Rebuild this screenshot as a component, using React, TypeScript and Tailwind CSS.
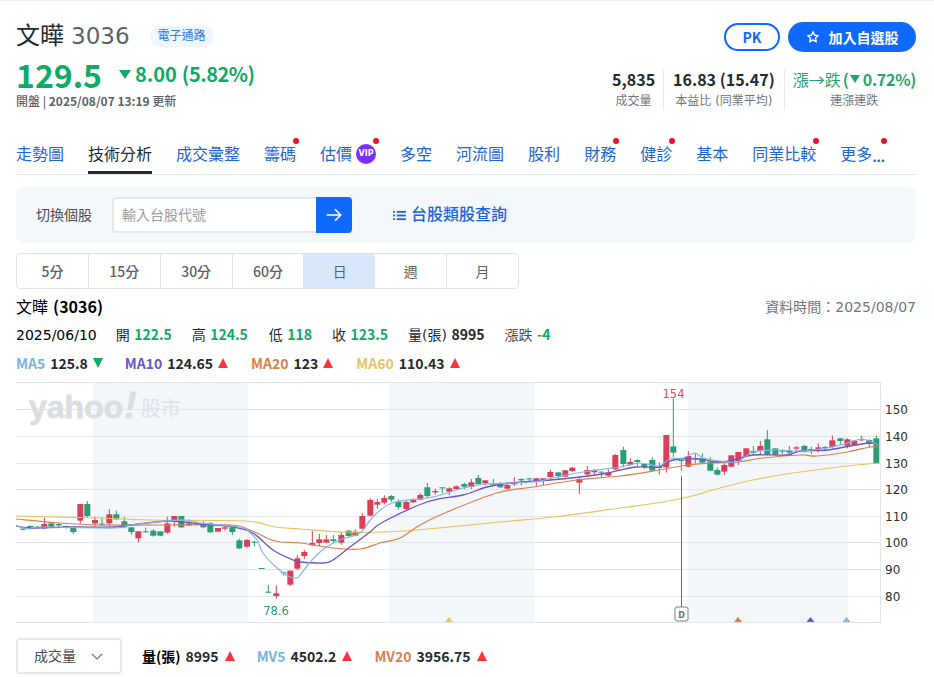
import React from "react";

type C = [number, number, number, number, number, "r" | "g"];
const z4: C[] = [[69,445,446,449,451,"g"],[91,436,438,445,447,"g"],[113,438,440,442,445,"g"],[133,413,432,445,447,"r"],[154,428,430,440,442,"g"],[176,430,432,436,441,"g"],[198,436,438,440,446,"g"],[220,440,442,456,462,"g"],[241,372,372,422,430,"r"],[262,363,372,408,411,"g"],[285,410,420,430,440,"r"],[306,412,431,434,438,"g"],[328,387,403,430,438,"r"],[349,392,403,418,421,"g"],[373,410,424,442,445,"g"],[394,442,442,456,464,"g"],[415,454,454,475,487,"r"],[437,443,454,457,458,"g"],[460,448,452,467,470,"g"],[481,454,454,467,469,"g"],[502,410,430,458,461,"r"],[523,408,408,422,440,"r"],[544,408,408,442,444,"g"],[567,418,430,436,438,"r"],[589,424,429,432,436,"g"],[610,424,432,442,443,"g"],[631,427,430,457,458,"g"],[654,444,444,455,456,"r"],[675,438,442,446,452,"r"],[697,436,442,456,465,"g"],[718,476,481,505,507,"g"],[741,477,480,500,505,"r"],[763,482,485,487,500,"g"],[785,564,564,566,566,"g"],[805,615,635,638,639,"g"],[829,616,640,648,656,"r"],[851,577,577,579,587,"g"],[871,572,572,614,618,"r"],[892,525,535,566,570,"r"]];
const z5: C[] = [[13,510,516,528,537,"r"],[37,452,489,496,497,"r"],[58,462,478,489,498,"r"],[79,465,478,488,490,"r"],[100,465,478,483,488,"g"],[124,455,465,488,495,"r"],[146,450,452,468,470,"g"],[166,448,455,467,469,"r"],[187,400,408,446,448,"r"],[211,355,360,407,409,"r"],[232,357,366,374,386,"r"],[253,346,354,368,374,"r"],[274,345,348,359,366,"g"],[295,358,366,381,389,"g"],[319,362,366,387,392,"r"],[340,355,358,367,369,"r"],[361,340,345,359,361,"r"],[382,309,322,348,355,"g"],[406,326,333,337,344,"r"],[427,321,322,325,340,"g"],[448,322,325,335,345,"r"],[469,317,319,327,329,"r"],[493,308,312,320,328,"g"],[514,297,307,321,327,"r"],[535,285,294,312,314,"g"],[556,300,301,310,316,"r"],[580,297,311,313,315,"g"],[601,306,310,322,323,"g"],[622,308,315,326,329,"r"],[643,292,308,313,317,"r"],[664,295,297,301,317,"g"],[688,294,295,297,303,"g"],[709,295,295,305,317,"r"],[730,295,295,303,315,"r"],[751,269,276,291,303,"r"],[775,277,277,288,298,"g"],[796,271,271,290,292,"r"],[817,261,263,273,276,"r"],[838,290,297,308,342,"r"],[862,258,270,283,287,"r"],[883,267,270,277,285,"r"],[904,274,275,277,291,"g"],[925,268,278,287,291,"r"],[946,222,225,268,270,"r"]];
const z6: C[] = [[10,200,210,252,262,"g"],[31,235,246,254,258,"r"],[52,238,240,246,258,"g"],[73,250,252,262,267,"g"],[97,232,240,272,275,"g"],[118,247,261,263,285,"g"],[139,165,165,262,278,"r"],[160,55,199,218,232,"g"],[184,240,240,242,272,"g"],[205,213,228,260,262,"r"],[226,220,235,238,250,"r"],[247,220,238,248,250,"g"],[271,232,245,272,274,"g"],[292,263,270,284,286,"g"],[313,250,255,275,285,"r"],[334,226,226,260,262,"r"],[355,216,216,243,255,"r"],[379,205,205,228,230,"r"],[400,198,213,218,222,"g"],[421,183,198,213,222,"r"],[442,150,178,224,226,"g"],[466,205,205,224,226,"g"],[487,207,212,214,222,"g"],[508,198,212,218,224,"g"],[529,198,202,206,213,"r"],[553,195,198,214,217,"g"],[574,200,207,209,222,"g"],[595,190,202,207,217,"r"],[616,198,201,203,214,"g"],[637,166,181,201,203,"r"],[661,175,175,183,195,"g"],[682,175,178,197,205,"r"],[703,180,182,195,197,"r"],[724,167,178,181,184,"r"],[748,178,180,192,203,"g"],[769,166,175,250,251,"g"]];

const toPx = (arr: C[], ox: number): C[] =>
  arr.map(([x, a, b, c, d, k]) => [ox + x / 3, 380 + a / 3, 380 + b / 3, 380 + c / 3, 380 + d / 3, k] as C);
const candles: C[] = [...toPx(z4, 0), ...toPx(z5, 300), ...toPx(z6, 620)];

const ma60 = "16,516 100,518 150,520 245,521 275,527 300,529 343,532 383,532 417,530 500,522 553,517 620,508 657,503 688,497 720,488 753,480 793,473 847,466 878,463";
const ma20 = "16,519 60,523 100,525 160,525 230,525 250,530 275,541 300,543 333,548 360,549 380,543 400,538 420,525 447,512 497,493 533,487 577,480 620,476 659,470 687,465 710,463 737,462 763,458 800,455 817,456 847,452 870,447 878,447";
const ma10 = "16,526 30,528 70,527 115,527 130,525 170,521 200,524 233,527 253,533 273,550 293,560 300,562 323,563 333,560 350,547 370,532 383,522 427,502 463,495 487,487 510,483 550,480 580,477 608,473 620,470 637,467 659,467 667,462 680,459 700,459 717,462 733,460 753,455 787,455 800,451 827,450 850,446 870,443 878,445";
const ma5 = "16,526 30,529 40,527 115,528 130,525 180,520 200,523 240,527 247,530 257,540 263,553 277,568 290,577 297,578 300,575 312,560 325,548 340,540 360,533 372,518 392,503 433,497 463,488 487,484 533,482 557,477 583,472 620,467 640,463 659,466 670,459 683,458 695,453 703,458 720,461 737,462 753,452 777,450 800,451 827,448 847,443 863,439 878,445";

// Catmull-Rom through the points, so the averages read as smooth curves
function smooth(s: string) {
  const p = s.split(" ").map((q) => q.split(",").map(Number));
  let d = `M${p[0][0]} ${p[0][1]}`;
  for (let i = 0; i < p.length - 1; i++) {
    const a = p[i - 1] || p[i];
    const b = p[i];
    const c = p[i + 1];
    const e = p[i + 2] || c;
    d += `C${b[0] + (c[0] - a[0]) / 6} ${b[1] + (c[1] - a[1]) / 6} ${c[0] - (e[0] - b[0]) / 6} ${c[1] - (e[1] - b[1]) / 6} ${c[0]} ${c[1]}`;
  }
  return d;
}

const gridY = [382, 409, 436, 463, 489, 516, 542, 569, 596, 622];
const axis: [number, string][] = [[409, "150"], [436, "140"], [463, "130"], [489, "120"], [516, "110"], [542, "100"], [569, "90"], [596, "80"]];
const tabs: [string, boolean, boolean][] = [["走勢圖", false, false], ["技術分析", true, false], ["成交彙整", false, false], ["籌碼", false, true], ["估價", false, true], ["多空", false, false], ["河流圖", false, false], ["股利", false, false], ["財務", false, true], ["健診", false, true], ["基本", false, false], ["同業比較", false, true], ["更多", false, true]];
const periods = ["5分", "15分", "30分", "60分", "日", "週", "月"];
const B = "font-['Noto_Sans_CJK_TC'] font-bold";

const Up = () => <span className="inline-block w-0 h-0 border-x-[5px] border-x-transparent border-b-[10px] border-b-[#ff333a]" />;
const Down = () => <span className="inline-block w-0 h-0 border-x-[5px] border-x-transparent border-t-[10px] border-t-[#0fa968]" />;

function Chart() {
  return (
    <svg viewBox="16 382 900 242" className="block w-[900px] h-[242px]" style={{ fontFamily: '"DejaVu Sans",sans-serif' }}>
      <rect x="93" y="382" width="155" height="240" fill="#f4f7fa" />
      <rect x="389" y="382" width="146" height="240" fill="#f4f7fa" />
      <rect x="688" y="382" width="160" height="240" fill="#f4f7fa" />
      {gridY.map((y) => <line key={y} x1="16" x2="881" y1={y + 0.5} y2={y + 0.5} stroke="#e2e6ea" />)}
      <line x1="880.5" x2="880.5" y1="382" y2="622" stroke="#e2e6ea" />
      <text x="29" y="418" fontSize="32" fontWeight="700" fill="#dcdfe2" stroke="#dcdfe2" strokeWidth="0.8" style={{ fontFamily: '"Liberation Sans",sans-serif' }}>yahoo<tspan fontSize="37" fontStyle="italic" dx="1">!</tspan></text>
      <text x="141" y="416" fontSize="20" fill="#dfe2e5" style={{ fontFamily: '"Noto Sans CJK TC",sans-serif' }}>股市</text>
      {candles.map(([x, a, b, c, d, k], i) => {
        const col = k === "r" ? "#d8405a" : "#2a9d75";
        return (
          <g key={i}>
            <line x1={x} x2={x} y1={a} y2={d} stroke={col} strokeWidth="1" />
            <rect x={x - 3} y={b} width="6" height={Math.max(c - b, 1)} fill={col} />
          </g>
        );
      })}
      <path d={smooth(ma60)} fill="none" stroke="#e6c463" strokeWidth="1.2" />
      <path d={smooth(ma20)} fill="none" stroke="#d9804f" strokeWidth="1.2" />
      <path d={smooth(ma10)} fill="none" stroke="#6d55c9" strokeWidth="1.3" />
      <path d={smooth(ma5)} fill="none" stroke="#82b6e4" strokeWidth="1.2" />
      <text x="673.5" y="398" fontSize="11.5" fill="#e2495f" textAnchor="middle">154</text>
      <text x="276" y="615" fontSize="11.5" fill="#2a9d75" textAnchor="middle">78.6</text>
      <line x1="681.5" x2="681.5" y1="476" y2="607" stroke="#666c73" />
      <rect x="675" y="607" width="13" height="14" rx="2" fill="#fff" stroke="#7b8087" />
      <text x="681.5" y="618" fontSize="8" fontWeight="700" fill="#6e737a" textAnchor="middle">D</text>
      <polygon points="449,617 453,622 445,622" fill="#e6c463" />
      <polygon points="738,617 742,622 734,622" fill="#d9804f" />
      <polygon points="810.5,617 814.5,622 806.5,622" fill="#6d55c9" />
      <polygon points="846.5,617 850.5,622 842.5,622" fill="#82b6e4" />
      {axis.map(([y, t]) => <text key={t} x="885" y={y + 4.5} fontSize="12" fill="#2c2f33">{t}</text>)}
    </svg>
  );
}

export default function App() {
  return (
    <div className="w-[934px] h-[677px] overflow-hidden bg-white border-t border-[#f0f1f2] pl-4 pr-[18px] text-[#232a31]" style={{ fontFamily: '"DejaVu Sans","Noto Sans CJK TC",sans-serif' }}>
      {/* header */}
      <div className="flex justify-between h-[116px]">
        <div>
          <div className="flex items-center h-[30px] mt-[20px]">
            <span className="text-[24px] leading-[30px] text-[#232a31]">文曄</span>
            <span className="text-[23px] leading-[30px] text-[#5b636a] ml-[7px] font-normal">3036</span>
            <span className="ml-[20px] h-[21px] px-2 rounded-full bg-[#eff6fe] text-[#2a7de1] text-[12px] leading-[21px]">電子通路</span>
          </div>
          <div className={`flex items-center mt-[5px] h-[36px] text-[#0fa968] ${B}`}>
            <span className="text-[32px] leading-[36px]">129.5</span>
            <span className="ml-[17px] mt-[1px] w-0 h-0 border-x-[6px] border-x-transparent border-t-[9px] border-t-[#0fa968]" />
            <span className="ml-[4px] text-[20px] leading-[36px]">8.00</span>
            <span className="ml-[5px] text-[20px] leading-[36px] tracking-[-0.5px]">(5.82%)</span>
          </div>
          <div className="text-[12px] leading-[16px] mt-[1px] text-[#5b636a] font-['Noto_Sans_CJK_TC'] font-medium">開盤 | <b>2025/08/07 13:19</b> 更新</div>
        </div>
        <div className="flex flex-col items-end pt-[21px]">
          <div className="flex gap-2">
            <button className={`w-[56px] h-[28px] mt-[1px] rounded-full border-2 border-[#0f69ff] text-[#0f69ff] text-[14px] leading-none ${B}`}>PK</button>
            <button className={`flex items-center justify-center gap-[9px] w-[128px] h-[30px] rounded-full bg-[#0f69ff] text-white text-[14px] ${B}`}>
              <svg width="14" height="14" viewBox="0 0 24 24" fill="none" stroke="#fff" strokeWidth="2.4" strokeLinejoin="round"><path d="M12 3l2.7 5.9 6.3.7-4.7 4.3 1.3 6.4L12 17.1l-5.6 3.2 1.3-6.4L3 9.6l6.3-.7z" /></svg>
              加入自選股
            </button>
          </div>
          <div className="flex mt-[17px] h-[41px]">
            <div className="flex flex-col items-center pr-[8px] border-r border-[#e8eaed]">
              <span className={`text-[16px] leading-[20px] ${B}`}>5,835</span>
              <span className="text-[12px] leading-[18px] mt-[3px] text-[#6e7780]">成交量</span>
            </div>
            <div className="flex flex-col items-center px-[9px] border-r border-[#e8eaed]">
              <span className={`text-[16px] leading-[20px] ${B}`}>16.83 (15.47)</span>
              <span className="text-[12px] leading-[18px] mt-[3px] text-[#6e7780]">本益比 (同業平均)</span>
            </div>
            <div className="flex flex-col items-center pl-[8px]">
              <span className={`flex items-center text-[16px] leading-[20px] text-[#27a36f] whitespace-nowrap ${B}`}>
                <span className="font-normal">漲→跌</span>
                <span className="ml-[2px]">(</span>
                <span className="inline-block w-0 h-0 ml-[1px] border-x-[5px] border-x-transparent border-t-[8px] border-t-[#27a36f]" />
                <span className="ml-[3px] tracking-[-0.3px]">0.72%)</span>
              </span>
              <span className="text-[12px] leading-[18px] mt-[3px] text-[#6e7780]">連漲連跌</span>
            </div>
          </div>
        </div>
      </div>
      {/* tabs */}
      <div className="flex gap-6 h-[58px] border-b border-[#e6e9ec] pt-[25px]">
        {tabs.map(([t, on, dot]) => (
          <div key={t} className={`relative h-[32px] text-[16px] leading-[26px] whitespace-nowrap ${on ? "text-[#232a31] border-b-[3px] border-[#232a31]" : "text-[#1c66d6]"} flex items-start`}>
            {t}
            {t === "更多" && <span className="font-['Noto_Sans_CJK_TC'] font-medium tracking-[-0.6px]">...</span>}
            {t === "估價" && <span className="ml-[4px] mt-[2px] w-5 h-5 rounded-full bg-[#7d2eff] text-white text-[8px] font-bold leading-5 text-center">VIP</span>}
            {dot && <span className={`absolute top-[-4px] ${t === "更多" ? "right-[-2px]" : "right-[-3px]"} w-[6px] h-[6px] rounded-full bg-[#eb0f29]`} />}
          </div>
        ))}
      </div>
      {/* search panel */}
      <div className="flex items-center h-[56px] mt-[12px] rounded-lg bg-[#f5f8fa]">
        <span className="ml-[20px] text-[14px] text-[#464e56]">切換個股</span>
        <div className="flex ml-[20px] h-[36px]">
          <input readOnly placeholder="輸入台股代號" className="w-[204px] h-[36px] pl-[8px] rounded-l border-2 border-[#e4e7eb] border-r-0 bg-white text-[14px] placeholder:text-[#979ea8] outline-none" />
          <div className="flex items-center justify-center w-[36px] h-[36px] rounded-r bg-[#0f69ff]">
            <svg width="18" height="18" viewBox="0 0 24 24" fill="none" stroke="#fff" strokeWidth="2.2" strokeLinecap="round" strokeLinejoin="round"><path d="M3 12h18M14 5l7 7-7 7" /></svg>
          </div>
        </div>
        <div className="flex items-center ml-[41px] text-[16px] font-medium text-[#1c66d6]">
          <svg width="13" height="11" viewBox="0 0 14 12" className="mr-[5px]" fill="#1c66d6"><rect x="0" y="1" width="2" height="2" /><rect x="4" y="1" width="10" height="2" /><rect x="0" y="5" width="2" height="2" /><rect x="4" y="5" width="10" height="2" /><rect x="0" y="9" width="2" height="2" /><rect x="4" y="9" width="10" height="2" /></svg>
          台股類股查詢
        </div>
      </div>
      {/* periods */}
      <div className="flex w-[503px] h-[36px] mt-[10px] rounded border border-[#e0e4e9] overflow-hidden">
        {periods.map((p, i) => (
          <div key={p} className={`flex-1 flex items-center justify-center text-[14px] font-['Noto_Sans_CJK_TC'] text-[#5b636a] ${i < 6 ? "border-r border-[#e0e4e9]" : ""} ${p === "日" ? "bg-[#d9e9fb] border-r-0 text-[#3c434a]" : ""} ${i > 3 ? "font-normal" : "font-medium"}`}>{p}</div>
        ))}
      </div>
      {/* title */}
      <div className="flex justify-between items-center h-[20px] mt-[8px]">
        <span className="text-[16px] text-black">文曄 <span className={B}>(3036)</span></span>
        <span className="text-[14px] text-[#6e7780]">資料時間：2025/08/07</span>
      </div>
      <div className="flex items-center h-[20px] mt-[8px] text-[14px] whitespace-nowrap">
        <span className="text-black">2025/06/10</span>
        <span className="ml-[19px]">開 <b className={`${B} text-[#0fa968]`}>122.5</b></span>
        <span className="ml-[20px]">高 <b className={`${B} text-[#0fa968]`}>124.5</b></span>
        <span className="ml-[21px]">低 <b className={`${B} text-[#0fa968]`}>118</b></span>
        <span className="ml-[20px]">收 <b className={`${B} text-[#0fa968]`}>123.5</b></span>
        <span className="ml-[20px]">量(張) <b className={B}>8995</b></span>
        <span className="ml-[20px] text-[#464e56]">漲跌 <b className={`${B} text-[#0fa968]`}>-4</b></span>
      </div>
      <div className={`flex items-center h-[20px] mt-[8px] text-[14px] whitespace-nowrap ${B}`}>
        <span className="text-[#7db3e2]">MA5</span><span className="ml-[5px]">125.8</span><span className="ml-[5px] flex"><Down /></span>
        <span className="ml-[22px] text-[#6d55c9]">MA10</span><span className="ml-[5px]">124.65</span><span className="ml-[5px] flex"><Up /></span>
        <span className="ml-[23px] text-[#d9804f]">MA20</span><span className="ml-[5px]">123</span><span className="ml-[5px] flex"><Up /></span>
        <span className="ml-[23px] text-[#e6c463]">MA60</span><span className="ml-[5px]">110.43</span><span className="ml-[5px] flex"><Up /></span>
      </div>
      <div className="mt-[9px]"><Chart /></div>
      {/* bottom */}
      <div className="flex items-center h-[36px] mt-[14px] text-[14px] whitespace-nowrap">
        <div className="flex items-center justify-between w-[106px] h-[36px] pl-[16px] pr-[17px] rounded-sm border-2 border-[#e6e9ec] text-[#464e56]">
          成交量
          <svg width="12" height="12" viewBox="0 0 12 12" fill="none" stroke="#6e7780" strokeWidth="1.2"><path d="M1 4l5 5 5-5" /></svg>
        </div>
        <span className={`ml-[20px] text-black ${B}`}>量(張)</span><span className={`ml-[5px] ${B}`}>8995</span><span className="ml-[6px] flex"><Up /></span>
        <span className={`ml-[22px] text-[#7db3e2] ${B}`}>MV5</span><span className={`ml-[5px] ${B}`}>4502.2</span><span className="ml-[6px] flex"><Up /></span>
        <span className={`ml-[22px] text-[#d9804f] ${B}`}>MV20</span><span className={`ml-[5px] ${B}`}>3956.75</span><span className="ml-[6px] flex"><Up /></span>
      </div>
    </div>
  );
}
